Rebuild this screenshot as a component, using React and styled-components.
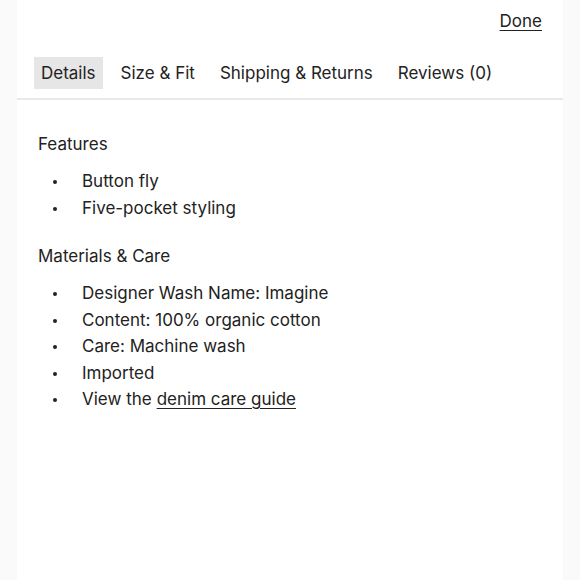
import React from "react";
import styled, { createGlobalStyle } from "styled-components";

const Global = createGlobalStyle`
  html, body { margin: 0; padding: 0; background: #fafafa; }
  body { font-family: Inter, "Liberation Sans", sans-serif; color: #222; }
`;

const Page = styled.div`
  height: 580px;
  display: flex;
  padding: 0 17px 0 17px;
  box-sizing: border-box;
`;

const Panel = styled.div`
  flex: 1;
  background: #fff;
  display: flex;
  flex-direction: column;
`;

const TopBar = styled.div`
  display: flex;
  justify-content: flex-end;
  padding: 10px 21px 0 0;
  height: 46px;
  box-sizing: border-box;
`;

const DoneLink = styled.a`
  font-size: 17px;
  line-height: 22px;
  color: #222;
  text-decoration: underline;
  text-underline-offset: 3px;
`;

const Tabs = styled.div`
  display: flex;
  align-items: flex-start;
  gap: 11px;
  padding: 11px 0 0 17px;
  height: 54px;
  box-sizing: border-box;
  border-bottom: 2px solid #e8e8e8;
`;

const Tab = styled.button`
  font: inherit;
  font-size: 17px;
  color: #222;
  border: 0;
  background: ${(p) => (p.$active ? "#e6e6e6" : "transparent")};
  padding: 5px 7px;
  line-height: 22px;
  cursor: pointer;
`;

const Content = styled.div`
  padding: 33px 21px 0 21px;
`;

const Heading = styled.div`
  font-size: 17px;
  line-height: 22px;
  margin-bottom: 13px;
`;

const List = styled.ul`
  margin: 0 0 24px 0;
  padding: 0;
  list-style: none;
`;

const Item = styled.li`
  display: flex;
  align-items: center;
  font-size: 17px;
  line-height: 26.5px;
  &::before {
    content: "";
    width: 4px;
    height: 4px;
    border-radius: 50%;
    background: #222;
    margin: 2px 25px 0 15px;
    flex: none;
  }
`;

const GuideLink = styled.a`
  color: #222;
  text-decoration: underline;
  text-underline-offset: 3px;
  margin-left: 5px;
`;

export default function App() {
  return (
    <>
      <Global />
      <Page>
        <Panel>
          <TopBar>
            <DoneLink>Done</DoneLink>
          </TopBar>
          <Tabs>
            <Tab $active>Details</Tab>
            <Tab>Size &amp; Fit</Tab>
            <Tab>Shipping &amp; Returns</Tab>
            <Tab>Reviews (0)</Tab>
          </Tabs>
          <Content>
            <Heading>Features</Heading>
            <List>
              <Item>Button fly</Item>
              <Item>Five-pocket styling</Item>
            </List>
            <Heading>Materials &amp; Care</Heading>
            <List>
              <Item>Designer Wash Name: Imagine</Item>
              <Item>Content: 100% organic cotton</Item>
              <Item>Care: Machine wash</Item>
              <Item>Imported</Item>
              <Item>
                View the<GuideLink>denim care guide</GuideLink>
              </Item>
            </List>
          </Content>
        </Panel>
      </Page>
    </>
  );
}
